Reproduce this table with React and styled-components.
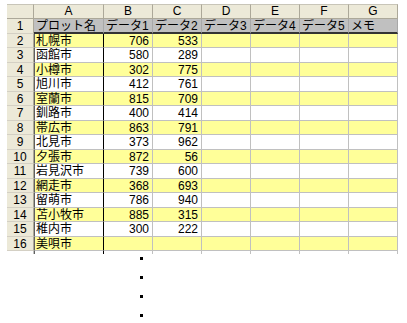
import styled, { createGlobalStyle } from 'styled-components'

const GlobalStyle = createGlobalStyle`
  body {
    margin: 0;
    background: #fff;
    font-family: "Liberation Sans", "Noto Sans CJK JP", sans-serif;
  }
`

// 都市データ
const rows = [
  ['札幌市', 706, 533],
  ['函館市', 580, 289],
  ['小樽市', 302, 775],
  ['旭川市', 412, 761],
  ['室蘭市', 815, 709],
  ['釧路市', 400, 414],
  ['帯広市', 863, 791],
  ['北見市', 373, 962],
  ['夕張市', 872, 56],
  ['岩見沢市', 739, 600],
  ['網走市', 368, 693],
  ['留萌市', 786, 940],
  ['苫小牧市', 885, 315],
  ['稚内市', 300, 222],
  ['美唄市', '', ''],
]

const cols = ['A', 'B', 'C', 'D', 'E', 'F', 'G']
const titles = ['プロット名', 'データ1', 'データ2', 'データ3', 'データ4', 'データ5', 'メモ']

function App() {
  return (
    <Page>
      <GlobalStyle />
      <Sheet>
        <Corner />
        {cols.map((c) => <ColHead key={c}>{c}</ColHead>)}

        <RowHead>1</RowHead>
        {titles.map((t, i) => <TitleCell key={i} $first={i === 0}>{t}</TitleCell>)}

        {rows.map((r, i) => {
          const yellow = i % 2 === 0
          return [
            <RowHead key={'h' + i}>{i + 2}</RowHead>,
            <Cell key={'a' + i} $yellow={yellow} $name>{r[0]}</Cell>,
            <Cell key={'b' + i} $yellow={yellow} $num>{r[1]}</Cell>,
            <Cell key={'c' + i} $yellow={yellow} $num>{r[2]}</Cell>,
            <Cell key={'d' + i} $yellow={yellow} />,
            <Cell key={'e' + i} $yellow={yellow} />,
            <Cell key={'f' + i} $yellow={yellow} />,
            <Cell key={'g' + i} $yellow={yellow} />,
          ]
        })}

        <Stub />
        <Stub $name />
        {cols.slice(1).map((c) => <Stub key={c} />)}
      </Sheet>
      <Dots>
        <Dot /><Dot /><Dot /><Dot />
      </Dots>
    </Page>
  )
}

const Page = styled.div`
  padding: 4px 0 0 7px;
`

const Sheet = styled.div`
  display: grid;
  grid-template-columns: 27px 70px repeat(6, 49px);
  grid-template-rows: 15px repeat(16, 14.5px) 3px;
  width: 391px;
  font-size: 12px;
  line-height: 14px;
  color: #000;
`

const Corner = styled.div`
  background: #ece9d8;
  border-top: 1px solid #c8c5b8;
  border-right: 1px solid #aca899;
  border-bottom: 1px solid #aca899;
`

const ColHead = styled.div`
  background: #ece9d8;
  border-top: 1px solid #c8c5b8;
  border-right: 1px solid #aca899;
  border-bottom: 1px solid #aca899;
  text-align: center;
  box-sizing: border-box;
  line-height: 13px;
`

const RowHead = styled.div`
  background: #ece9d8;
  border-right: 1px solid #aca899;
  border-bottom: 1px solid #d4d0c4;
  text-align: center;
  box-sizing: border-box;
`

const TitleCell = styled.div`
  background: #c0c0c0;
  border-right: 1px solid #a8a8a8;
  border-bottom: 2px solid #333;
  padding-left: 2px;
  white-space: nowrap;
  overflow: hidden;
  box-sizing: border-box;
`

const Cell = styled.div`
  background: ${(p) => (p.$yellow ? '#ffff99' : '#fff')};
  border-right: ${(p) => (p.$name ? '1px solid #000' : '1px solid #c0c0c0')};
  border-left: ${(p) => (p.$name ? '1px solid #606060' : 'none')};
  border-bottom: 1px solid #c0c0c0;
  text-align: ${(p) => (p.$num ? 'right' : 'left')};
  padding: 0 3px 0 ${(p) => (p.$name ? '1px' : '2px')};
  white-space: nowrap;
  overflow: hidden;
  box-sizing: border-box;
`

const Stub = styled.div`
  border-right: ${(p) => (p.$name ? '1px solid #000' : '1px solid #c0c0c0')};
  border-left: ${(p) => (p.$name ? '1px solid #606060' : 'none')};
  box-sizing: border-box;
`

const Dots = styled.div`
  display: flex;
  flex-direction: column;
  gap: 16px;
  margin: 3px 0 0 133px;
`

const Dot = styled.span`
  display: block;
  width: 3px;
  height: 3px;
  background: #000;
`

export default App
